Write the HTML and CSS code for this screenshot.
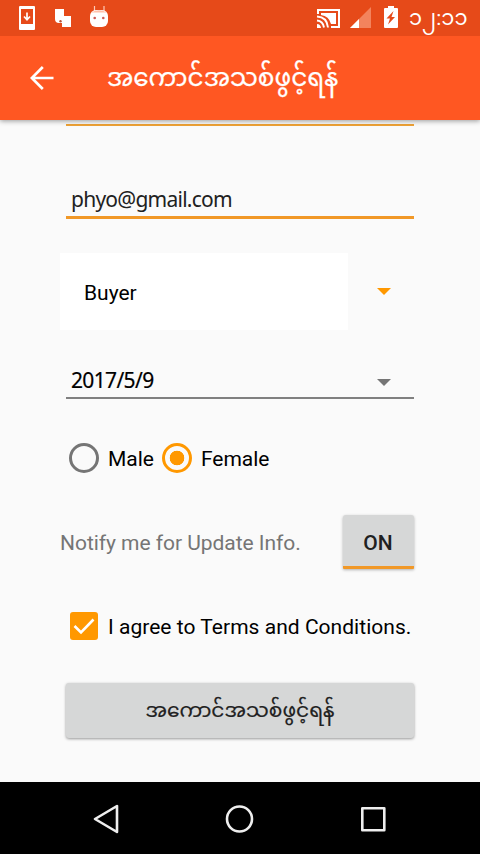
FILE: index.html
```html
<!DOCTYPE html>
<html lang="my">
<head>
<meta charset="utf-8">
<title>အကောင်အသစ်ဖွင့်ရန်</title>
<link rel="stylesheet" href="styles.css">
</head>
<body>
<div class="screen">
  <header class="status">
    <svg class="status-left" width="110" height="36" viewBox="0 0 110 36">
      <path fill="#fff" fill-rule="evenodd" d="M20 6h14q1 0 1 1v22q0 1-1 1H20q-1 0-1-1V7q0-1 1-1zm1 3v15h12V9z"/>
      <path d="M27 12.500v7m-3-3 3 3.300 3-3.300" fill="none" stroke="#fff" stroke-width="1.700"/>
      <path fill="#fff" d="M55 9h9v7h7v11h-9v-4h-3q-4 0-4-4z"/>
      <circle cx="60.500" cy="21.300" r="1.200" fill="#b5533a"/>
      <path d="M94.500 6v5M104 6v5" stroke="#ffc9b6" stroke-width="1.200"/>
      <rect x="90" y="10" width="18" height="17" rx="6" fill="#fff"/>
      <path d="M91.500 12.500q7.500-4.500 15 0z" fill="#ffc0aa"/>
      <circle cx="94.700" cy="18" r="1.300" fill="#ce5b55"/><circle cx="103.300" cy="18" r="1.300" fill="#ce5b55"/>
    </svg>
    <div class="status-right">
      <svg width="84" height="36" viewBox="316 0 84 36">
        <path d="M318 14v-4h21v17h-8" fill="none" stroke="#fff" stroke-width="2"/>
        <path fill="#fff" d="M321 13h15v11h-5q-2-8-10-9z"/>
        <path d="M317 16.500q10 .5 11 11M317 20.500q6 .5 7 7" fill="none" stroke="#fff" stroke-width="1.900"/>
        <path fill="#fff" d="M317 24q3.500 0 4 4h-4z"/>
        <path fill="#f3835d" d="M371 7v21h-21z"/><path fill="#fff" d="M359 19v9h-9z"/>
        <path fill="#fff" d="M388 8V6h6v2h3q1 0 1 1v18q0 1-1 1h-12q-1 0-1-1V9q0-1 1-1z"/>
        <path fill="#e64a19" d="m393.500 11-7 7.500h3.500l-2 6 7-7.500h-3.500z"/>
      </svg>
      <span class="clock">၁၂:၁၁</span>
    </div>
  </header>
  <div class="appbar">
    <svg class="back" width="24" height="24" viewBox="0 0 24 24"><path d="M23.500 12H2M12.800 1 1.800 12l11 11" fill="none" stroke="#fff" stroke-width="2.700"/></svg>
    <h1 class="title">အကောင်အသစ်ဖွင့်ရန်</h1>
  </div>
  <main class="form">
    <div class="field-end"></div>
    <div class="email">phyo@gmail.com</div>
    <div class="role">
      <div class="role-value">Buyer</div>
      <span class="caret caret-on"></span>
    </div>
    <div class="date"><span>2017/5/9</span><span class="caret"></span></div>
    <div class="radios">
      <span class="radio"></span><span class="male">Male</span>
      <span class="radio radio-on"></span><span class="female">Female</span>
    </div>
    <div class="notify"><span class="notify-label">Notify me for Update Info.</span><span class="toggle">ON</span></div>
    <div class="agree">
      <span class="check"><svg width="28" height="28" viewBox="0 0 28 28"><path d="m4.500 14 6.500 6.500L23.500 7.500" fill="none" stroke="#fff" stroke-width="2.600"/></svg></span>
      <span class="agree-text">I agree to Terms and Conditions.</span>
    </div>
    <div class="submit"><span>အကောင်အသစ်ဖွင့်ရန်</span></div>
  </main>
  <nav class="nav">
    <svg width="30" height="30" viewBox="0 0 30 30"><path d="M25 2v26L3 15z"/></svg>
    <svg width="30" height="30" viewBox="0 0 30 30"><circle cx="14.500" cy="15" r="12.500"/></svg>
    <svg width="30" height="30" viewBox="0 0 30 30"><path d="M4.300 4.300h22v22h-22z"/></svg>
  </nav>
</div>
</body>
</html>
```
FILE: styles.css
```css
* { box-sizing: border-box; }
body { margin: 0; font: 21px/28px Roboto, "Noto Sans Myanmar", "Padauk", sans-serif; color: #000; }
.screen { width: 480px; height: 854px; display: flex; flex-direction: column; background: #fafafa; overflow: hidden; }
.status { height: 36px; background: #e64a19; display: flex; justify-content: space-between; flex: none; z-index: 2; }
.status-right { display: flex; width: 164px; }
.clock { color: #fff; padding: 4px 0 0 9px; white-space: nowrap; }
.appbar { height: 84px; flex: none; background: #ff5722; display: flex; align-items: center; padding-left: 30px; box-shadow: 0 1px 5px rgba(0,0,0,.4); z-index: 1; }
.title { margin: 0 0 0 53px; color: #fff; font-size: 24.7px; font-weight: 400; line-height: 50px; white-space: nowrap; -webkit-text-stroke: .25px #fff; }
.form { height: 662px; flex: none; display: flex; flex-direction: column; padding: 0 60px; }
.field-end { height: 6px; margin: 0 6px; border-bottom: 2px solid #eea236; flex: none; }
.email { margin: 55px 6px 0; height: 38px; padding: 4px 0 0 5px; border-bottom: 3px solid #f19827; font-family: "Noto Sans", sans-serif; letter-spacing: -.75px; color: #212121; }
.role { margin-top: 34px; height: 77px; display: flex; align-items: center; justify-content: space-between; padding-right: 29px; }
.role-value { width: 288px; height: 77px; background: #fff; padding: 26px 24px; }
.caret { border: 7px solid transparent; border-top-color: #757575; border-bottom: 0; }
.caret-on { border-top-color: #ff9800; }
.date { margin: 34px 6px 0; height: 35px; padding: 0 23px 1px 5px; border-bottom: 2px solid #808080; display: flex; align-items: center; justify-content: space-between; font-family: "Noto Sans", sans-serif; letter-spacing: -.65px; -webkit-text-stroke: .2px #000; }
.date .caret { margin-top: 5px; }
.radios { margin-top: 43px; height: 32px; display: flex; align-items: center; padding-left: 9px; }
.radio { width: 30px; height: 30px; border: 3px solid #757575; border-radius: 50%; margin-right: 9px; flex: none; }
.male { margin-right: 8px; padding-top: 2px; }
.female { padding-top: 2px; letter-spacing: -.05px; }
.radio-on { border-color: #ff9800; background: radial-gradient(circle, #ff9800 7px, transparent 7.6px); }
.notify { margin-top: 41px; height: 54px; display: flex; align-items: center; justify-content: space-between; padding-right: 6px; color: #757575; }
.notify-label { padding-top: 2px; letter-spacing: -.04px; }
.toggle { width: 71px; height: 54px; padding-right: 1px; border-radius: 3px 3px 1px 1px; background: #d6d7d7; border-bottom: 3px solid #f19827; color: #212121; text-align: center; line-height: 57px; font-weight: 500; box-shadow: 0 1px 3px rgba(0,0,0,.3); }
.agree { margin-top: 43px; height: 28px; display: flex; align-items: center; padding-left: 10px; white-space: nowrap; }
.agree-text { padding-top: 2px; letter-spacing: .03px; }
.check { width: 28px; height: 28px; background: #ff9800; border-radius: 3px; margin-right: 10px; flex: none; }
.submit { margin: 43px 6px 0; height: 55px; border-radius: 3px; background: #d6d7d7; box-shadow: 0 1px 3px rgba(0,0,0,.4); color: #212121; text-align: center; font-size: 20.2px; line-height: 55px; -webkit-text-stroke: .2px #212121; }
.nav { height: 72px; flex: none; background: #000; display: flex; justify-content: space-between; align-items: center; padding: 1px 92px 0; }
.nav svg { fill: none; stroke: #eee; stroke-width: 2.600; stroke-linejoin: round; }
```
